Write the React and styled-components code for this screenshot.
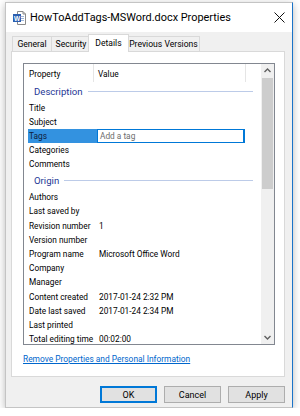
import React from 'react';
import styled, { createGlobalStyle } from 'styled-components';

const GlobalStyle = createGlobalStyle`
  body {
    margin: 0;
    background: #ffffff;
    font-family: Roboto, "Liberation Sans", Arial, sans-serif;
    color: #000;
  }
`;

const groups = [
  {
    title: 'Description',
    rows: [
      ['Title', ''],
      ['Subject', ''],
      ['Tags', '', true],
      ['Categories', ''],
      ['Comments', ''],
    ],
  },
  {
    title: 'Origin',
    rows: [
      ['Authors', ''],
      ['Last saved by', ''],
      ['Revision number', '1'],
      ['Version number', ''],
      ['Program name', 'Microsoft Office Word'],
      ['Company', ''],
      ['Manager', ''],
      ['Content created', '2017-01-24 2:32 PM'],
      ['Date last saved', '2017-01-24 2:34 PM'],
      ['Last printed', ''],
      ['Total editing time', '00:02:00'],
    ],
  },
];

const tabs = [
  { label: 'General', w: 40, ml: 0 },
  { label: 'Security', w: 40, ml: -1 },
  { label: 'Details', w: 41, ml: -3, active: true },
  { label: 'Previous Versions', w: 73, ml: -2 },
];

function DocIcon() {
  return (
    <svg width="13" height="14" viewBox="0 0 13 14">
      <path d="M4.5 0.5h5.5l2.5 2.5v10.5h-8z" fill="#fff" stroke="#8a8a8a" />
      <path d="M10 0.5v2.5h2.5" fill="none" stroke="#8a8a8a" />
      <rect x="6" y="5" width="5" height="1" fill="#9fb6d8" />
      <rect x="6" y="7" width="5" height="1" fill="#9fb6d8" />
      <rect x="6" y="9" width="5" height="1" fill="#9fb6d8" />
      <rect x="0" y="3" width="8" height="8" fill="#2b5fb0" />
      <text x="4" y="9.6" fontSize="6.5" fontFamily="Liberation Sans, sans-serif" fontWeight="bold" fill="#fff" textAnchor="middle">W</text>
    </svg>
  );
}

function CloseIcon() {
  return (
    <svg width="11" height="11" viewBox="0 0 11 11">
      <path d="M0.5 0.5l10 10M10.5 0.5l-10 10" stroke="#111" strokeWidth="1" />
    </svg>
  );
}

function Chevron({ down }) {
  return (
    <svg width="7" height="5" viewBox="0 0 7 5">
      <path d={down ? 'M0.5 1l3 3 3-3' : 'M0.5 4l3-3 3 3'} fill="none" stroke="#606060" strokeWidth="1.4" />
    </svg>
  );
}

export default function App() {
  return (
    <>
      <GlobalStyle />
      <Page>
        <Window>
          <TitleBar>
            <DocIcon />
            <Title>HowToAddTags-MSWord.docx Properties</Title>
            <Close><CloseIcon /></Close>
          </TitleBar>
          <Body>
            <TabRow>
              {tabs.map((t) => (
                <Tab key={t.label} $w={t.w} $ml={t.ml} $active={t.active}>{t.label}</Tab>
              ))}
            </TabRow>
            <Panel>
              <ListBox>
                <ListContent>
                  <Header>
                    <HeadCell $w={70}>Property</HeadCell>
                    <HeadCell $w={152}>Value</HeadCell>
                  </Header>
                  {groups.map((g) => (
                    <React.Fragment key={g.title}>
                      <Group>
                        <span>{g.title}</span>
                        <GroupLine />
                      </Group>
                      {g.rows.map(([name, value, selected]) => (
                        <Row key={name}>
                          <PropCell $selected={selected}>{name}</PropCell>
                          {selected ? (
                            <TagInput>Add a tag</TagInput>
                          ) : (
                            <ValueCell>{value}</ValueCell>
                          )}
                        </Row>
                      ))}
                    </React.Fragment>
                  ))}
                </ListContent>
                <ScrollBar>
                  <ArrowBox><Chevron /></ArrowBox>
                  <Track>
                    <Thumb />
                  </Track>
                  <ArrowBox><Chevron down /></ArrowBox>
                </ScrollBar>
              </ListBox>
              <RemoveLink>Remove Properties and Personal Information</RemoveLink>
            </Panel>
            <ButtonRow>
              <Button $default>OK</Button>
              <Button>Cancel</Button>
              <Button>Apply</Button>
            </ButtonRow>
          </Body>
        </Window>
      </Page>
    </>
  );
}

const Page = styled.div`
  padding: 2px 0 0 5px;
`;

const Window = styled.div`
  width: 288px;
  height: 406px;
  box-sizing: border-box;
  border: 1px solid #c4c4c4;
  border-right-color: #1a73c8;
  background: #f0f0f0;
  box-shadow: 0 2px 8px rgba(0, 0, 0, 0.28);
  display: flex;
  flex-direction: column;
`;

const TitleBar = styled.div`
  height: 29px;
  flex-shrink: 0;
  background: #ffffff;
  display: flex;
  align-items: center;
  padding: 0 0 0 7px;
`;

const Title = styled.div`
  margin-left: 4px;
  font-size: 10.9px;
  color: #000;
  white-space: nowrap;
`;

const Close = styled.div`
  margin-left: auto;
  margin-right: 7px;
  display: flex;
`;

const Body = styled.div`
  flex: 1;
  padding: 2px 7px 0 5px;
  display: flex;
  flex-direction: column;
`;

const TabRow = styled.div`
  height: 17px;
  display: flex;
  align-items: flex-end;
  padding-left: 1px;
  position: relative;
  z-index: 1;
`;

const Tab = styled.div`
  box-sizing: border-box;
  width: ${(p) => p.$w}px;
  margin-left: ${(p) => p.$ml}px;
  height: ${(p) => (p.$active ? 18 : 15)}px;
  margin-bottom: ${(p) => (p.$active ? -1 : 0)}px;
  border: 1px solid #d9d9d9;
  border-bottom: none;
  background: ${(p) => (p.$active ? '#ffffff' : '#f0f0f0')};
  display: flex;
  align-items: center;
  justify-content: center;
  padding-bottom: ${(p) => (p.$active ? 2 : 0)}px;
  font-size: 8.6px;
  white-space: nowrap;
  position: relative;
  z-index: ${(p) => (p.$active ? 2 : 1)};
`;

const Panel = styled.div`
  height: 326px;
  box-sizing: border-box;
  background: #ffffff;
  border: 1px solid #d9d9d9;
  padding: 11px 9px 0 11px;
`;

const ListBox = styled.div`
  width: 252px;
  height: 282px;
  box-sizing: border-box;
  border: 1px solid #828790;
  display: flex;
  overflow: hidden;
`;

const ListContent = styled.div`
  flex: 1;
  overflow: hidden;
  font-size: 8.3px;
`;

const Header = styled.div`
  height: 18px;
  display: flex;
`;

const HeadCell = styled.div`
  width: ${(p) => p.$w}px;
  box-sizing: border-box;
  border-right: 1px solid #e5e5e5;
  padding-left: 5px;
  display: flex;
  align-items: center;
  padding-top: 2px;
  &:nth-child(2) {
    padding-left: 4px;
  }
`;

const Group = styled.div`
  height: 18.6px;
  display: flex;
  align-items: center;
  padding: 0 8px 0 10px;
  color: #1e3796;
  font-size: 9.6px;
`;

const GroupLine = styled.div`
  flex: 1;
  height: 1px;
  margin-left: 5px;
  background: #bccbe8;
`;

const Row = styled.div`
  height: 14.2px;
  display: flex;
  align-items: stretch;
  padding-left: 4px;
  white-space: nowrap;
`;

const PropCell = styled.div`
  width: 68px;
  flex-shrink: 0;
  padding-left: 1px;
  display: flex;
  align-items: center;
  background: ${(p) => (p.$selected ? '#3392e0' : 'transparent')};
  color: ${(p) => (p.$selected ? '#10203a' : '#000')};
`;

const ValueCell = styled.div`
  padding-left: 2px;
  display: flex;
  align-items: center;
`;

const TagInput = styled.div`
  width: 148px;
  box-sizing: border-box;
  border: 1px solid #0078d7;
  border-right-width: 2px;
  padding-left: 2px;
  display: flex;
  align-items: center;
  color: #6d6d6d;
`;

const ScrollBar = styled.div`
  width: 13px;
  flex-shrink: 0;
  background: #f0f0f0;
  display: flex;
  flex-direction: column;
`;

const ArrowBox = styled.div`
  height: 13px;
  display: flex;
  align-items: center;
  justify-content: center;
`;

const Track = styled.div`
  flex: 1;
  padding: 1px 1px 0;
`;

const Thumb = styled.div`
  height: 111px;
  background: #cdcdcd;
`;

const RemoveLink = styled.a`
  display: block;
  margin-top: 9px;
  font-size: 8.4px;
  color: #0066cc;
  text-decoration: underline;
  white-space: nowrap;
`;

const ButtonRow = styled.div`
  display: flex;
  justify-content: flex-end;
  gap: 7px;
  padding-top: 9px;
`;

const Button = styled.div`
  width: 57px;
  height: 17px;
  box-sizing: border-box;
  background: #e1e1e1;
  border: 1px solid ${(p) => (p.$default ? '#0078d7' : '#adadad')};
  box-shadow: ${(p) => (p.$default ? 'inset 0 0 0 1px #0078d7' : 'none')};
  display: flex;
  align-items: center;
  justify-content: center;
  font-size: 9px;
`;
